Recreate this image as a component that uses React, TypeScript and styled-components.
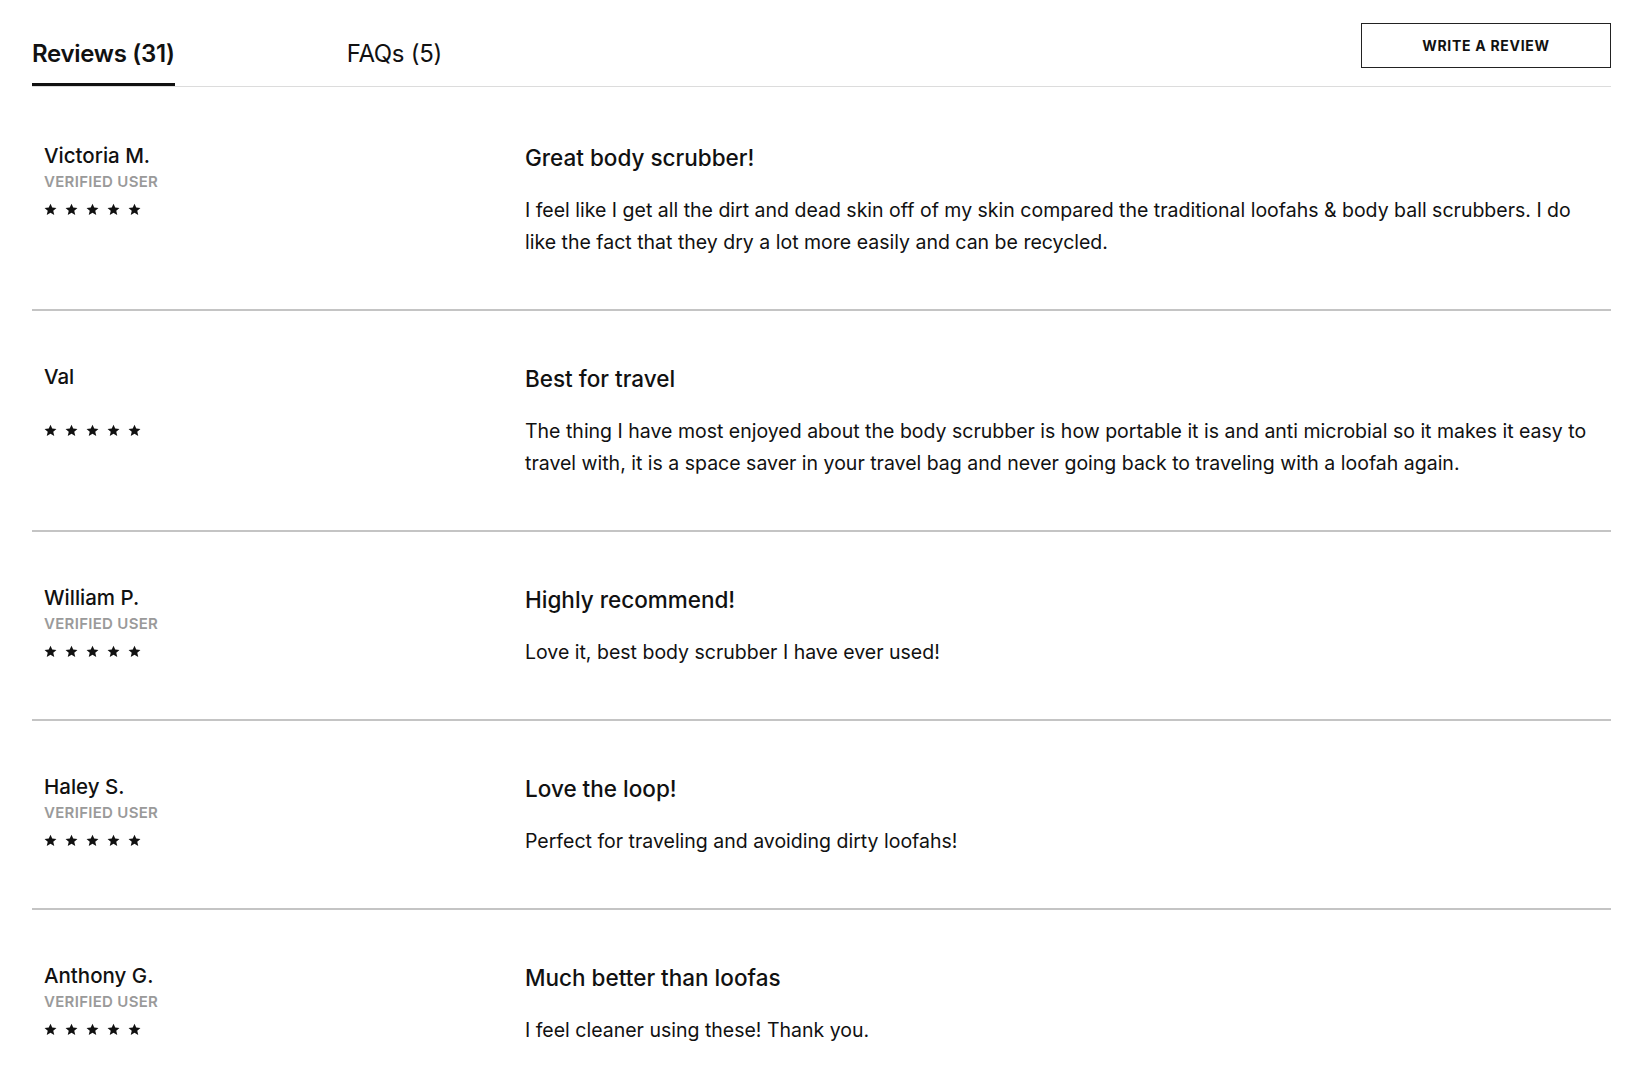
import React from "react";
import styled, { createGlobalStyle } from "styled-components";

const GlobalStyle = createGlobalStyle`
  html, body {
    margin: 0;
    padding: 0;
    background: #ffffff;
  }
  body {
    font-family: "Inter", "Noto Sans", "Liberation Sans", sans-serif;
    color: #111111;
    -webkit-font-smoothing: antialiased;
  }
  * { box-sizing: border-box; }
`;

const Page = styled.div`
  padding: 0 35px 0 32px;
`;

const Header = styled.div`
  display: flex;
  align-items: flex-start;
  height: 87px;
  border-bottom: 1px solid #dcdcdc;
`;

const Tabs = styled.nav`
  display: flex;
  gap: 172px;
  align-self: stretch;
`;

const Tab = styled.div<{ $active?: boolean }>`
  height: 86px;
  padding-top: 39px;
  font-size: 24px;
  line-height: 30px;
  font-weight: ${(p) => (p.$active ? 600 : 400)};
  letter-spacing: -0.3px;
  color: #111;
  border-bottom: 3px solid ${(p) => (p.$active ? "#111" : "transparent")};
  cursor: pointer;
`;

const WriteButton = styled.button`
  margin-left: auto;
  margin-top: 23px;
  width: 250px;
  height: 45px;
  background: #fff;
  border: 1.5px solid #222;
  font-family: inherit;
  font-size: 14px;
  font-weight: 700;
  letter-spacing: 0.7px;
  color: #111;
  cursor: pointer;
`;

const Row = styled.article`
  display: grid;
  grid-template-columns: 493px 1fr;
  padding: 54px 0 51px;
  border-bottom: 2px solid #c4c4c4;
  &:first-of-type {
    padding-top: 57px;
  }
`;

const Author = styled.div`
  padding-left: 12px;
  display: flex;
  flex-direction: column;
`;

const Name = styled.div`
  font-size: 20.5px;
  line-height: 24px;
  font-weight: 500;
  color: #111;
`;

const Verified = styled.div<{ $hidden?: boolean }>`
  margin-top: 5px;
  font-size: 15px;
  line-height: 18px;
  font-weight: 600;
  letter-spacing: 0.3px;
  color: #9a9a9a;
  visibility: ${(p) => (p.$hidden ? "hidden" : "visible")};
`;

const Stars = styled.div`
  margin-top: 12px;
  display: flex;
  gap: 8px;
  height: 13px;
  align-items: center;
`;

const Content = styled.div`
  display: flex;
  flex-direction: column;
  padding-right: 8px;
`;

const Title = styled.h3`
  margin: 0;
  font-size: 22.5px;
  line-height: 28px;
  font-weight: 500;
  color: #111;
`;

const Body = styled.p`
  margin: 22px 0 0;
  font-size: 19.5px;
  line-height: 32px;
  color: #111;
`;

const Star = () => (
  <svg width="13" height="13" viewBox="0 0 24 24" aria-hidden="true">
    <path
      d="M12 1.2l3.2 7.2 7.8.7-5.9 5.2 1.8 7.7L12 18l-6.9 4 1.8-7.7L1 9.1l7.8-.7z"
      fill="#111"
    />
  </svg>
);

type Review = {
  name: string;
  verified: boolean;
  title: string;
  body: string;
};

const reviews: Review[] = [
  {
    name: "Victoria M.",
    verified: true,
    title: "Great body scrubber!",
    body:
      "I feel like I get all the dirt and dead skin off of my skin compared the traditional loofahs & body ball scrubbers. I do like the fact that they dry a lot more easily and can be recycled.",
  },
  {
    name: "Val",
    verified: false,
    title: "Best for travel",
    body:
      "The thing I have most enjoyed about the body scrubber is how portable it is and anti microbial so it makes it easy to travel with, it is a space saver in your travel bag and never going back to traveling with a loofah again.",
  },
  {
    name: "William P.",
    verified: true,
    title: "Highly recommend!",
    body: "Love it, best body scrubber I have ever used!",
  },
  {
    name: "Haley S.",
    verified: true,
    title: "Love the loop!",
    body: "Perfect for traveling and avoiding dirty loofahs!",
  },
  {
    name: "Anthony G.",
    verified: true,
    title: "Much better than loofas",
    body: "I feel cleaner using these! Thank you.",
  },
];

export default function App() {
  return (
    <>
      <GlobalStyle />
      <Page>
        <Header>
          <Tabs>
            <Tab $active>Reviews (31)</Tab>
            <Tab>FAQs (5)</Tab>
          </Tabs>
          <WriteButton>WRITE A REVIEW</WriteButton>
        </Header>
        {reviews.map((r) => (
          <Row key={r.name}>
            <Author>
              <Name>{r.name}</Name>
              <Verified $hidden={!r.verified}>VERIFIED USER</Verified>
              <Stars>
                {[0, 1, 2, 3, 4].map((i) => (
                  <Star key={i} />
                ))}
              </Stars>
            </Author>
            <Content>
              <Title>{r.title}</Title>
              <Body>{r.body}</Body>
            </Content>
          </Row>
        ))}
      </Page>
    </>
  );
}
